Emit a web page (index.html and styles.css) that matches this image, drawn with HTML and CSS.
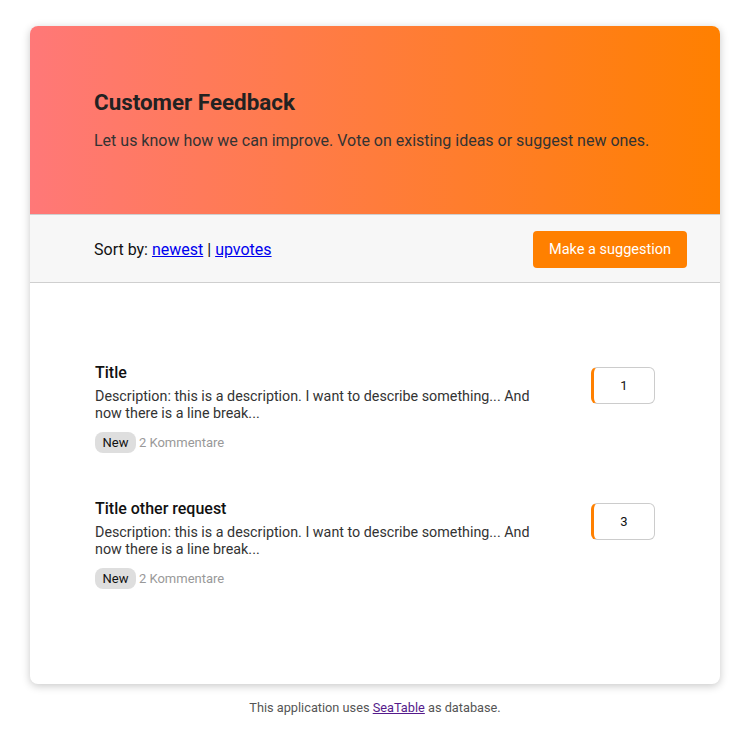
FILE: index.html
```html
<!DOCTYPE html>
<html>
<head>
<meta charset="utf-8">
<link rel="stylesheet" href="styles.css">
</head>
<body>
<div class="page">
  <div class="card">
    <header class="hero">
      <h1 class="hero-title">Customer Feedback</h1>
      <p class="hero-sub">Let us know how we can improve. Vote on existing ideas or suggest new ones.</p>
    </header>
    <div class="sortbar">
      <div class="sort">Sort by: <a href="#">newest</a> | <a href="#">upvotes</a></div>
      <button class="btn">Make a suggestion</button>
    </div>
    <div class="list">
      <div class="item">
        <div class="item-main">
          <div class="item-title">Title</div>
          <div class="item-desc">Description: this is a description. I want to describe something... And now there is a line break...</div>
          <div class="item-meta"><span class="tag">New</span><span class="comments">2 Kommentare</span></div>
        </div>
        <div class="vote">1</div>
      </div>
      <div class="item">
        <div class="item-main">
          <div class="item-title">Title other request</div>
          <div class="item-desc">Description: this is a description. I want to describe something... And now there is a line break...</div>
          <div class="item-meta"><span class="tag">New</span><span class="comments">2 Kommentare</span></div>
        </div>
        <div class="vote">3</div>
      </div>
    </div>
  </div>
  <footer class="footer">This application uses <a href="#">SeaTable</a> as database.</footer>
</div>
</body>
</html>
```
FILE: styles.css
```css
html, body {
  margin: 0;
  padding: 0;
  background: #fff;
  font-family: Roboto, "Liberation Sans", sans-serif;
}
.page {
  padding: 26px 35px 0 30px;
}
.card {
  width: 690px;
  border-radius: 8px;
  overflow: hidden;
  background: #fff;
  box-shadow: 0 2px 8px rgba(0, 0, 0, 0.22);
}
.hero {
  background: linear-gradient(to right, #ff7878, #ff8000);
  padding: 64px 64px 63px 64px;
}
.hero-title {
  margin: 0;
  font-size: 22.4px;
  line-height: 24px;
  font-weight: 700;
  color: #222;
}
.hero-sub {
  margin: 17px 0 0 0;
  font-size: 16px;
  line-height: 20px;
  color: #333;
}
.sortbar {
  display: flex;
  justify-content: space-between;
  align-items: center;
  background: #f7f7f7;
  border-top: 1px solid #cfcfcf;
  border-bottom: 1px solid #cfcfcf;
  padding: 16px 33px 14px 64px;
}
.sort {
  font-size: 16px;
  color: #111;
}
.sort a {
  color: #0000ee;
}
.btn {
  background: #ff8000;
  color: #fff;
  border: none;
  border-radius: 4px;
  height: 37px;
  width: 154px;
  font-family: Roboto, "Liberation Sans", sans-serif;
  font-size: 14.5px;
  padding: 0;
}
.list {
  padding: 80px 65px 95px 65px;
  display: flex;
  flex-direction: column;
  gap: 46px;
}
.item {
  display: flex;
  justify-content: space-between;
  align-items: flex-start;
}
.item-main {
  width: 450px;
}
.item-title {
  font-size: 16px;
  line-height: 20px;
  font-weight: 500;
  color: #111;
}
.item-desc {
  margin-top: 5px;
  font-size: 14.3px;
  line-height: 17px;
  color: #333;
}
.item-meta {
  margin-top: 10px;
  display: flex;
  align-items: center;
  font-size: 13px;
}
.tag {
  background: #dedede;
  border-radius: 8px;
  height: 21px;
  line-height: 21px;
  padding: 0 7.5px;
  color: #111;
}
.comments {
  margin-left: 3px;
  color: #999;
}
.vote {
  margin-top: 4px;
  width: 60px;
  height: 35px;
  border: 1px solid #ccc;
  border-left: 3px solid #ff8000;
  border-radius: 6px;
  display: flex;
  align-items: center;
  justify-content: center;
  font-size: 13px;
  color: #111;
}
.footer {
  margin-top: 16px;
  width: 690px;
  text-align: center;
  font-size: 12.75px;
  line-height: 16px;
  color: #555;
}
.footer a {
  color: #551a8b;
}
```
